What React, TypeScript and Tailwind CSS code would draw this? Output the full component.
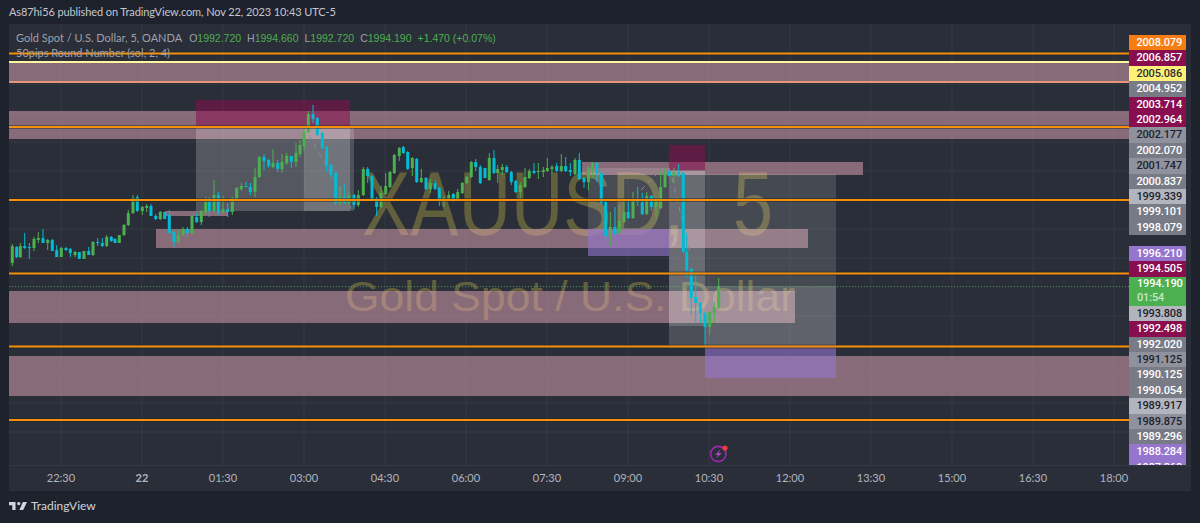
type Candle = [number, number, number, number, number, "g" | "c"];

// x, body top, body bottom, wick top, wick bottom, colour (page pixels)
const candles: Candle[] = [
  [12.3, 246, 263, 244, 266, "g"], [16.7, 247, 257, 246, 258, "c"], [20.3, 246, 257, 243, 258, "g"], [24.7, 246, 248, 233, 249, "c"],
  [29.3, 247, 248, 243, 259, "c"], [34, 239, 248, 237, 251, "g"], [38.3, 238, 240, 232, 243, "g"], [43, 238, 243, 229, 243, "c"],
  [47.7, 240, 243, 239, 250, "g"], [52.3, 240, 251, 239, 251, "c"], [56.7, 250, 257, 245, 257, "c"], [61.3, 248, 257, 247, 257, "g"],
  [66, 248, 250, 247, 251, "c"], [70.3, 249, 253, 248, 257, "c"], [75, 252, 255, 251, 257, "g"], [79.3, 252, 259, 252, 259, "c"],
  [84, 251, 259, 251, 259, "g"], [88.7, 251, 255, 247, 255, "c"], [93, 242, 255, 241, 256, "g"], [97.7, 242, 243, 238, 246, "c"],
  [102.3, 243, 246, 238, 247, "c"], [106.7, 237, 246, 235, 247, "g"], [111.3, 237, 241, 236, 242, "c"], [115, 239, 243, 238, 243, "c"],
  [119.3, 235, 243, 235, 243, "g"], [124, 225, 235, 224, 236, "g"], [128.3, 213, 225, 210, 226, "g"], [133, 198, 213, 195, 214, "g"],
  [137.3, 197, 211, 195, 212, "c"], [142.3, 207, 211, 206, 215, "g"], [146.7, 206, 208, 204, 212, "g"], [151, 206, 216, 204, 216, "c"],
  [155.7, 216, 219, 214, 220, "c"], [160.3, 212, 219, 211, 220, "g"], [164.7, 212, 219, 212, 219, "c"], [169.3, 215, 233, 210, 233, "c"],
  [174, 232, 242, 231, 247, "c"], [178.3, 235, 242, 230, 243, "g"], [183, 229, 235, 227, 236, "g"], [187.3, 229, 233, 227, 237, "c"],
  [192, 216, 233, 215, 234, "g"], [196.7, 217, 222, 213, 223, "c"], [201.3, 211, 222, 210, 225, "g"], [205.7, 202, 212, 197, 215, "g"],
  [209.3, 202, 211, 197, 217, "c"], [214, 195, 211, 180, 212, "g"], [218.3, 195, 212, 192, 215, "c"], [223, 209, 212, 196, 213, "g"],
  [227.7, 209, 212, 203, 217, "c"], [232.3, 198, 212, 197, 215, "g"], [236.7, 188, 200, 187, 201, "g"], [241.3, 186, 189, 183, 191, "g"],
  [246, 186, 187, 182, 187, "c"], [250.3, 187, 192, 183, 195, "c"], [255, 177, 192, 168, 197, "g"], [259.3, 157, 177, 156, 178, "g"],
  [264, 157, 161, 154, 170, "c"], [268.7, 160, 166, 159, 168, "c"], [273, 163, 167, 149, 168, "g"], [277.7, 163, 169, 160, 172, "c"],
  [282, 162, 169, 154, 173, "g"], [286.7, 156, 163, 153, 165, "g"], [291.3, 156, 162, 156, 168, "c"], [296, 153, 162, 143, 167, "g"],
  [300, 145, 154, 140, 157, "g"], [304, 132, 146, 125, 151, "g"], [308.3, 114, 132, 111, 133, "g"], [313, 114, 119, 105, 123, "c"],
  [317.3, 118, 135, 117, 136, "c"], [322.3, 133, 148, 132, 149, "c"], [326.7, 147, 166, 146, 172, "c"], [331, 165, 175, 164, 178, "c"],
  [335.7, 173, 203, 172, 205, "c"], [340, 197, 203, 187, 205, "g"], [344.7, 197, 203, 184, 204, "c"], [349, 195, 203, 192, 205, "g"],
  [354, 195, 205, 194, 209, "c"], [358.3, 195, 205, 190, 207, "g"], [363.3, 169, 195, 167, 196, "g"], [367.7, 169, 176, 167, 183, "c"],
  [372, 176, 199, 175, 200, "c"], [376.7, 198, 207, 197, 216, "c"], [381, 193, 207, 186, 208, "g"], [385.7, 186, 194, 173, 195, "g"],
  [390, 172, 187, 171, 188, "g"], [394.3, 155, 173, 154, 174, "g"], [399.3, 148, 156, 147, 161, "g"], [403.3, 147, 153, 146, 154, "c"],
  [407.7, 152, 169, 151, 170, "c"], [412.3, 158, 168, 157, 176, "g"], [416.7, 159, 182, 158, 183, "c"], [421.3, 178, 182, 169, 183, "g"],
  [426, 178, 189, 177, 190, "c"], [430.3, 183, 189, 179, 193, "g"], [435, 183, 189, 180, 190, "c"], [439.3, 188, 199, 187, 206, "c"],
  [444, 198, 201, 196, 207, "g"], [448.7, 195, 199, 191, 200, "g"], [453.3, 194, 199, 193, 202, "c"], [457.7, 192, 199, 189, 200, "g"],
  [462.3, 183, 193, 182, 194, "g"], [466.7, 177, 183, 176, 184, "g"], [471.3, 162, 177, 161, 178, "g"], [475.7, 162, 167, 159, 171, "c"],
  [480.3, 167, 183, 165, 184, "c"], [485, 168, 178, 168, 178, "c"], [489.3, 158, 180, 153, 181, "g"], [494, 158, 173, 150, 174, "c"],
  [497.7, 169, 173, 165, 183, "g"], [502.3, 167, 170, 164, 175, "g"], [506.7, 167, 172, 165, 173, "c"], [511.3, 172, 182, 171, 185, "c"],
  [515.7, 181, 192, 180, 193, "c"], [520.3, 185, 192, 182, 198, "g"], [525, 177, 187, 168, 188, "g"], [529.3, 171, 178, 169, 179, "g"],
  [534, 171, 173, 163, 174, "c"], [538.3, 171, 172, 163, 179, "g"], [543.3, 170, 172, 167, 177, "g"], [547.3, 168, 171, 158, 172, "g"],
  [552, 167, 169, 165, 173, "g"], [556.7, 166, 171, 163, 172, "c"], [561.3, 166, 171, 154, 172, "g"], [565.7, 166, 171, 157, 172, "c"],
  [570.3, 170, 172, 163, 176, "c"], [575, 160, 174, 158, 175, "g"], [579.3, 160, 179, 153, 180, "c"], [584, 178, 182, 177, 188, "c"],
  [588.4, 168, 182, 166, 190, "g"], [592.4, 163, 170, 162, 178, "g"], [596.8, 163, 173, 162, 182, "c"], [601.3, 173, 203, 172, 204, "c"],
  [605.7, 202, 236, 201, 241, "c"], [610.3, 227, 236, 212, 246, "g"], [615, 227, 234, 207, 235, "c"], [619.3, 221, 233, 205, 234, "g"],
  [624, 212, 222, 202, 223, "g"], [628.3, 212, 218, 199, 219, "c"], [633, 199, 218, 192, 219, "g"], [637.7, 199, 202, 187, 206, "c"],
  [642.3, 202, 214, 193, 215, "c"], [646.7, 196, 214, 192, 215, "g"], [651.3, 196, 207, 195, 211, "c"], [656, 199, 207, 197, 217, "g"],
  [660.7, 187, 208, 170, 209, "g"], [665, 172, 187, 168, 188, "g"], [669.3, 171, 176, 168, 177, "c"], [674, 172, 176, 168, 183, "g"],
  [678.7, 172, 176, 164, 177, "c"], [683.3, 173, 252, 172, 253, "c"], [686.7, 252, 270, 233, 277, "c"], [691.3, 269, 298, 268, 315, "c"],
  [695.7, 297, 303, 272, 322, "c"], [700.3, 303, 313, 302, 323, "c"], [705, 313, 327, 312, 347, "c"], [709.7, 312, 327, 311, 335, "g"],
  [714.3, 307, 313, 302, 323, "g"], [718.7, 286, 308, 278, 309, "g"],
];

const priceLabels: [string, string, string][] = [
  ["2008.079", "bg-[#f77c12]", "text-white"],
  ["2006.857", "bg-[#880e4f]", "text-white"],
  ["2005.086", "bg-[#fff176]", "text-[#2a2e39]"],
  ["2004.952", "bg-[#787b86]", "text-white"],
  ["2003.714", "bg-[#880e4f]", "text-white"],
  ["2002.964", "bg-[#880e4f]", "text-white"],
  ["2002.177", "bg-[#8f929c]", "text-[#1e222d]"],
  ["2002.070", "bg-[#787b86]", "text-white"],
  ["2001.747", "bg-[#8f929c]", "text-[#1e222d]"],
  ["2000.837", "bg-[#787b86]", "text-white"],
  ["1999.339", "bg-[#b2b5be]", "text-[#1e222d]"],
  ["1999.101", "bg-[#787b86]", "text-white"],
  ["1998.079", "bg-[#787b86]", "text-white"],
];

const lowerLabels: [string, string, string][] = [
  ["1993.808", "bg-[#b2b5be]", "text-[#1e222d]"],
  ["1992.498", "bg-[#880e4f]", "text-white"],
  ["1992.020", "bg-[#787b86]", "text-white"],
  ["1991.125", "bg-[#8f929c]", "text-[#1e222d]"],
  ["1990.125", "bg-[#787b86]", "text-white"],
  ["1990.054", "bg-[#787b86]", "text-white"],
  ["1989.917", "bg-[#b2b5be]", "text-[#1e222d]"],
  ["1989.875", "bg-[#8f929c]", "text-[#1e222d]"],
  ["1989.296", "bg-[#787b86]", "text-white"],
  ["1988.284", "bg-[#9575cd]", "text-white"],
  ["1987.368", "bg-[#9575cd]", "text-white"],
];

const times = ["22:30", "22", "01:30", "03:00", "04:30", "06:00", "07:30", "09:00", "10:30", "12:00", "13:30", "15:00", "16:30", "18:00"];

const gridX = [61, 142, 223, 304, 385, 466, 547, 628, 709, 790, 871, 952, 1033, 1114];
const gridY = [84.5, 113, 142, 171, 200, 229, 258, 287, 316, 345, 374, 403, 432];
const orangeLines = [53.5, 127, 200, 273.5, 346.5, 420];

// x, y, w, h, alpha
const greyBoxes: [number, number, number, number, number][] = [
  [196, 127, 154, 84, 0.2],
  [304, 127, 50, 84, 0.17],
  [588, 168, 81, 61, 0.14],
  [669, 171, 36, 177, 0.16],
  [669, 171, 36, 155, 0.16],
  [705, 174, 131, 172, 0.13],
  [705, 286, 131, 60, 0.14],
];

const bands: [number, number, number, number][] = [
  [9, 63, 1120, 18],
  [9, 111, 1120, 28],
  [165, 211, 63, 5],
  [582, 162, 281, 13],
  [156, 229, 652, 19],
  [9, 291, 786, 32],
  [9, 356, 1120, 40],
];

function ChartDrawing() {
  return (
    <svg viewBox="9 24 1120 441" width={1120} height={441} className="block">
      {gridX.map((x) => (
        <line key={x} x1={x} x2={x} y1={24} y2={465} stroke="#343843" />
      ))}
      {gridY.map((y) => (
        <line key={y} x1={9} x2={1129} y1={y} y2={y} stroke="#343843" />
      ))}

      <g fontFamily="'Liberation Sans', sans-serif" fill="#625f3d">
        <text x={362} y={235} textLength={322} lengthAdjust="spacingAndGlyphs" fontSize={90}>
          XAUUSD,
        </text>
        <text x={733} y={235} textLength={40} lengthAdjust="spacingAndGlyphs" fontSize={90}>
          5
        </text>
        <text x={345} y={311} textLength={450} lengthAdjust="spacingAndGlyphs" fontSize={43}>
          Gold Spot / U.S. Dollar
        </text>
      </g>

      {bands.map(([x, y, w, h], i) => (
        <rect key={i} x={x} y={y} width={w} height={h} fill="#e4a8b7" fillOpacity={0.5} />
      ))}
      <rect x={588} y={229} width={81} height={27} fill="#9575cd" fillOpacity={0.6} />
      <rect x={705} y={346} width={131} height={32} fill="#9575cd" fillOpacity={0.6} />
      {greyBoxes.map(([x, y, w, h, a], i) => (
        <rect key={i} x={x} y={y} width={w} height={h} fill="#ffffff" fillOpacity={a} />
      ))}
      <rect x={196} y={100} width={154} height={27} fill="#880e4f" fillOpacity={0.55} />
      <rect x={669} y={145} width={36} height={25} fill="#880e4f" fillOpacity={0.55} />

      <g stroke="#8a8d96" strokeDasharray="5 5" fill="none">
        <path d="M309 135 L352 210" />
        <path d="M641 190 L656 175" />
        <path d="M672 178 L690 252" />
      </g>

      <line x1={9} x2={1129} y1={286.5} y2={286.5} stroke="#4caf50" strokeOpacity={0.75} strokeDasharray="1 2" />

      {candles.map(([x, top, bottom, wickTop, wickBottom, c], i) => {
        const color = c === "g" ? "#4caf50" : "#00bcd4";
        return (
          <g key={i} fill={color}>
            <rect x={x - 0.5} y={wickTop} width={1} height={wickBottom - wickTop} />
            <rect x={x - 1.5} y={top} width={3} height={bottom - top} />
          </g>
        );
      })}

      <line x1={9} x2={1129} y1={62} y2={62} stroke="#fff59d" strokeWidth={2} />
      <line x1={9} x2={1129} y1={82} y2={82} stroke="#e8967a" strokeWidth={2} />
      {orangeLines.map((y) => (
        <g key={y}>
          <line x1={9} x2={1129} y1={y} y2={y} stroke="#1e222d" strokeOpacity={0.45} strokeWidth={4} />
          <line x1={9} x2={1129} y1={y} y2={y} stroke="#f79009" strokeWidth={2} />
        </g>
      ))}

      <circle cx={718.3} cy={454} r={7.6} fill="#2a2e39" stroke="#9c27b0" strokeWidth={1.6} />
      <path d="M720.5 449.5 L715 455 L718 455 L716 458.8 L721.8 453 L718.8 453 Z" fill="#ab47bc" />
      <circle cx={725} cy={448} r={2.6} fill="#f23645" />
    </svg>
  );
}

function PriceLabel({ text, bg, color }: { text: string; bg: string; color: string }) {
  return (
    <div className={`h-[15.4px] shrink-0 pr-[4px] text-right font-['Roboto',sans-serif] text-[11px] font-medium leading-[15.4px] tracking-[-0.15px] ${bg} ${color}`}>{text}</div>
  );
}

export default function App() {
  return (
    <div className="flex h-[523px] w-[1200px] flex-col overflow-hidden bg-[#1e222d] font-['Lato',sans-serif] text-[#b2b5be]">
      <div className="h-6 pl-[9px] pt-[5px] text-[11px] leading-[14px] tracking-[-0.1px] text-[#c4c7ce]">
        As87hi56 published on TradingView.com, Nov 22, 2023 10:43 UTC-5
      </div>

      <div className="ml-[9px] flex h-[467px] w-[1182px] flex-col bg-[#2a2e39]">
        <div className="flex h-[441px]">
          <div className="relative w-[1120px] overflow-hidden">
            <ChartDrawing />
            <div className="absolute left-[7px] top-[7px] flex gap-[7px] text-[11px] leading-[14px] text-[#9ea1aa]">
              <span>Gold Spot / U.S. Dollar, 5, OANDA</span>
              <span className="flex gap-[6px] font-['Liberation_Sans',sans-serif] text-[10.5px]">
                <span>O<span className="text-[#4caf50]">1992.720</span></span>
                <span>H<span className="text-[#4caf50]">1994.660</span></span>
                <span>L<span className="text-[#4caf50]">1992.720</span></span>
                <span>C<span className="text-[#4caf50]">1994.190</span></span>
                <span className="text-[#4caf50]">+1.470 (+0.07%)</span>
              </span>
            </div>
            <div className="absolute left-[7px] top-[22px] text-[11px] leading-[14px] text-[#9ea1aa]">
              50pips Round Number (sol, 2, 4)
            </div>
          </div>

          <div className="flex h-[441px] w-[57px] flex-col overflow-hidden pt-[11px]">
            {priceLabels.map(([t, bg, c]) => (
              <PriceLabel key={t} text={t} bg={bg} color={c} />
            ))}
            <div className="h-[11px] shrink-0" />
            <PriceLabel text="1996.210" bg="bg-[#9575cd]" color="text-white" />
            <PriceLabel text="1994.505" bg="bg-[#880e4f]" color="text-white" />
            <div className="h-[29px] shrink-0 bg-[#4caf50] pl-[8px] pr-[4px] font-['Roboto',sans-serif] text-[11px] font-medium leading-[14.5px] tracking-[-0.15px] text-white">
              <div className="text-right">1994.190</div>
              <div className="text-[#c8e6c9]">01:54</div>
            </div>
            {lowerLabels.map(([t, bg, c]) => (
              <PriceLabel key={t} text={t} bg={bg} color={c} />
            ))}
          </div>
        </div>

        <div className="flex h-[26px] border-t border-[#343843] pl-[11.5px] text-[11px] leading-[24px]">
          {times.map((t) => (
            <span key={t} className={`w-[81px] shrink-0 text-center ${t === "22" ? "font-bold" : ""}`}>
              {t}
            </span>
          ))}
        </div>
      </div>

      <div className="flex items-center gap-[4px] pl-[9px] pt-[7px]">
        <svg viewBox="2 6 33 15" width={18} height={10} fill="#d1d4dc">
          <path d="M14 6H2v6h6v9h6V6z" />
          <circle cx={20} cy={9} r={3} />
          <path d="M28 21h-7l6.5-15H35L28 21z" />
        </svg>
        <span className="text-[12px] leading-[16px] text-[#d1d4dc]">TradingView</span>
      </div>
    </div>
  );
}
